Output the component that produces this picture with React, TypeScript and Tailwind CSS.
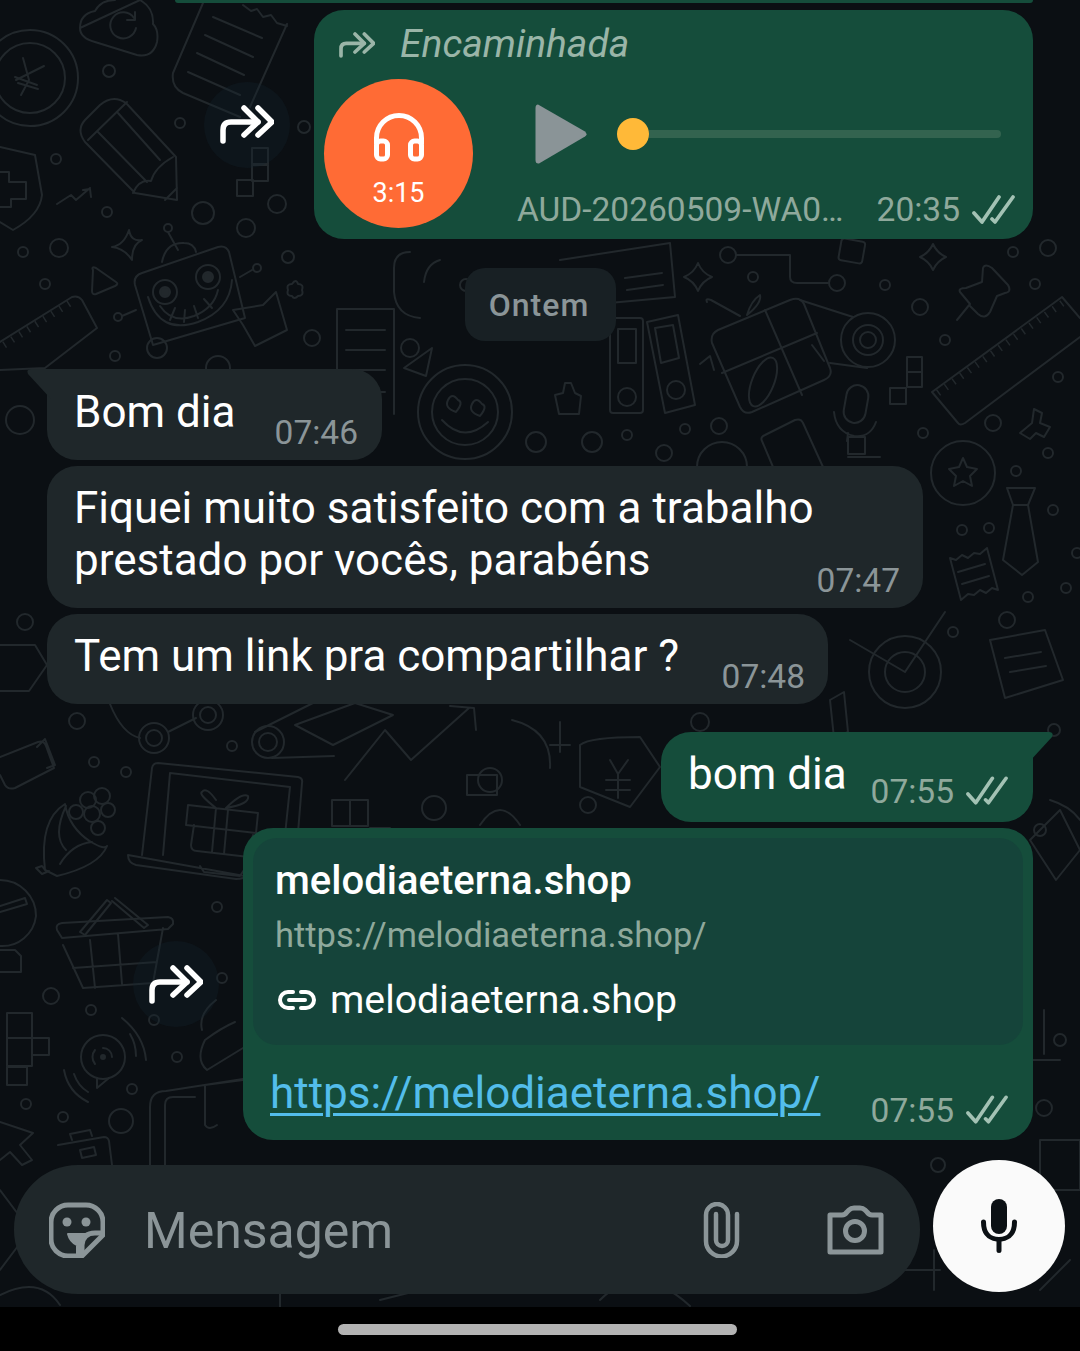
import React from 'react';

const font = { fontFamily: 'Roboto, "Noto Sans", sans-serif' };

const ForwardGlyph = ({ className }: { className: string }) => (
  <svg viewBox="0 0 54 39" fill="none" stroke="currentColor" strokeWidth="5.5" strokeLinecap="round" strokeLinejoin="round" className={className}>
    <path d="M3 36V25q0-8 8-8h27" />
    <path d="M24 3l14 14-14 13" />
    <path d="M38 3l14 14-14 13" />
  </svg>
);

const Checks = ({ className }: { className: string }) => (
  <svg viewBox="0 0 45 30" fill="none" stroke="currentColor" strokeWidth="3.7" strokeLinecap="round" strokeLinejoin="round" className={className}>
    <path d="M3 18l8 9L28 2" />
    <path d="M21 24l3 3L42 2" />
  </svg>
);

const Time = ({ children }: { children: string }) => <span className="text-[33.5px] leading-none">{children}</span>;

const ForwardButton = () => (
  <div className="flex h-[86px] w-[86px] items-center justify-center rounded-full bg-[#14232d]/30 text-white">
    <ForwardGlyph className="h-[39px] w-[54px]" />
  </div>
);

const dots: [number, number, number][] = [
  [109, 71, 6], [56, 159, 5], [107, 212, 5], [180, 123, 5], [203, 213, 11], [246, 228, 9], [277, 204, 9], [304, 127, 6], [288, 257, 6],
  [23, 252, 5], [59, 248, 9], [45, 284, 5], [115, 356, 5], [312, 338, 8], [627, 435, 5], [685, 429, 5], [719, 426, 8], [664, 453, 8],
  [753, 277, 5], [885, 285, 5], [920, 307, 8], [945, 340, 5], [1013, 252, 5], [1048, 248, 8], [1035, 284, 5], [1058, 377, 5], [993, 423, 8],
  [923, 433, 5], [1048, 453, 5], [1016, 471, 5], [1053, 510, 5], [962, 530, 5], [989, 528, 5], [1028, 597, 5], [1066, 588, 5], [953, 632, 5],
  [1077, 553, 5], [77, 721, 8], [94, 762, 5], [126, 772, 5], [75, 893, 5], [217, 907, 5], [51, 996, 8], [91, 1010, 5], [154, 1020, 5],
  [222, 978, 5], [177, 1057, 5], [132, 1089, 5], [26, 1104, 5], [63, 1117, 5], [121, 1121, 12], [232, 746, 5], [536, 442, 10], [592, 442, 10],
  [410, 348, 9], [466, 285, 6], [518, 286, 6], [700, 722, 9], [434, 808, 12], [490, 780, 12], [588, 805, 8], [1044, 1108, 8], [938, 1165, 7],
  [1054, 730, 6], [1040, 830, 6], [20, 420, 14], [938, 880, 6], [1000, 1000, 8], [950, 1040, 6], [1060, 1040, 6],
];

const Doodles = () => (
  <svg viewBox="0 0 1080 1307" fill="none" stroke="#22282c" strokeWidth="2" strokeLinecap="round" strokeLinejoin="round" className="absolute left-0 top-0 h-[1307px] w-[1080px]">
    {dots.map(([cx, cy, r], i) => <circle key={i} cx={cx} cy={cy} r={r} />)}
    {/* top left */}
    <circle cx="30" cy="78" r="48" /><circle cx="30" cy="78" r="35" /><path d="M23 58l6 22M44 66L16 80M15 77l22 8M18 83l20 6M29 80l-8 15" />
    <path d="M80 28q0-14 15-17q6-11 20-11M140 0q14 8 13 24q6 6 4 18q-4 16-20 13L95 42q-15-4-15-14z" /><path d="M134 18a13 13 0 1 0 2 10M135 12v8h-8" />
    <path d="M203 3L173 73q-2 14 10 20L240 117M287 24L250 107M243 5l8 6 6-2 6 8 8-2 6 8 10 3" />
    <path d="M213 17l49 21M205 35l48 22M197 53l47 22M188 72l52 23" />
    <path d="M100 105q13-11 26-2L176 157l1 43-42-7L85 142q-9-12 0-22zM118 113l42 47M98 132l49 50M88 140l39-38M133 193q6-14 18-12q4-14 22-24M165 200l12-12" />
    <path d="M0 147l35 8 7 40q-2 20-29 35l-13-8M0 172h9v10h17v17H11v8H0" />
    <path d="M57 204l14-9 5 5 14-12M83 190l7-1 1 8" />
    <rect x="252" y="148" width="16" height="16" /><rect x="252" y="165" width="16" height="16" /><rect x="237" y="180" width="16" height="16" />
    <path d="M112 247q12-2 17-17q2 12 13 10q-10 4-10 20q-8-12-20-13zM93 270q-2-4 3-2l20 14q3 2-1 4l-19 8q-4 1-4-3z" />
    <path d="M135 285q-2-9 7-12l76-26q8-2 11 5l16 66-92 27z" />
    <circle cx="165" cy="292" r="12" /><circle cx="165" cy="292" r="5" fill="#22282c" /><circle cx="208" cy="277" r="12" /><circle cx="208" cy="277" r="5" fill="#22282c" />
    <path d="M148 297q12 38 50 25q32-12 34-42M160 306q12 18 34 10q20-8 24-26M170 320l5-12M184 322l1-12M198 318l-4-12M212 308l-8-9" />
    <circle cx="168" cy="228" r="4" /><path d="M168 232l10 18M162 262q4-20 22-19q10 0 12 9" />
    <circle cx="118" cy="317" r="4" /><path d="M122 316l14-6" /><circle cx="257" cy="268" r="4" /><path d="M252 270l-12 7" />
    <circle cx="157" cy="348" r="10" /><circle cx="218" cy="368" r="12" />
    <path d="M233 310l30-5 13-13 11 38-32 16-12-21zM288 290q-2-6 4-6q4-6 6 0q6 0 4 6q2 6-4 6q-4 4-6 0q-6 0-4-6z" />
    <path d="M0 342l72-45q6-2 10 3l15 28-52 40M0 370l45-2" />
    <path d="M4 345l66-42" strokeWidth="7" strokeDasharray="1.5 8" strokeLinecap="butt" />
    {/* document and smiley */}
    <path d="M337 309h57v105M337 309v60M346 330h39M346 350h39M346 370h39M346 392h39" />
    <path d="M432 348l-28 20 22 8z" />
    <circle cx="465" cy="412" r="47" /><circle cx="465" cy="412" r="33" />
    <path d="M448 400q4-8 10 0q6 2-2 12q-12-4-8-12zM472 404q4-8 10 0q6 2-2 12q-12-4-8-12zM442 420q22 24 46 2" />
    <path d="M555 395l8-2 2-10 6 0 4 10 6 3-2 18-20 0z" />
    <path d="M410 252q-16 0-16 16v24q2 24 26 26M440 260q-14 4-16 22" />
    {/* note, binders, gift */}
    <path d="M560 260l110-17 5 54-110 10M625 278l37-5M627 290l36-5" />
    <path d="M698 263q4 10 14 14q-10 4-14 14q-4-10-14-14q10-4 14-14zM933 244q4 9 13 13q-9 4-13 13q-4-9-13-13q9-4 13-13z" />
    <circle cx="728" cy="255" r="8" /><path d="M736 255h54v22q0 6 7 6h32" /><circle cx="837" cy="283" r="8" />
    <rect x="840" y="240" width="24" height="22" rx="3" transform="rotate(10 852 250)" />
    <rect x="610" y="318" width="33" height="95" rx="3" /><rect x="618" y="329" width="18" height="34" /><circle cx="627" cy="397" r="9" />
    <path d="M647 322l31-7 17 90-30 8zM655 328l18-3 6 33-18 5z" /><circle cx="676" cy="390" r="9" />
    <path d="M718 330l72-30q10-4 14 4l26 64q3 8-6 12l-72 32q-8 3-12-5l-28-64q-2-9 6-13zM765 310l37 85M722 373l95-40" />
    <path d="M707 302q-2-4 4-2l29 16M747 315q4-14 13-20q2 8-13 20M700 364l10-8 4 14" />
    <ellipse cx="763" cy="382" rx="11" ry="26" transform="rotate(22 763 382)" />
    <circle cx="868" cy="340" r="27" /><circle cx="868" cy="340" r="15" /><circle cx="868" cy="340" r="8" /><path d="M800 300l53 17M830 363l37 5M812 345l12 16" />
    {/* top right */}
    <path d="M957 320l13-16-10-12q-2-4 6-4l16-6 1-14q2-5 9 0l16 17q4 7-3 8l-8 3-7 16q-5 8-12 2l-8-8" />
    <path d="M932 392l130-95 18 21M932 392l26 31q2 3 7 0L1080 337" />
    <path d="M938 393l126-91" strokeWidth="7" strokeDasharray="1.5 8" strokeLinecap="butt" />
    <rect x="907" y="357" width="15" height="15" /><rect x="907" y="372" width="15" height="15" /><rect x="890" y="388" width="16" height="16" />
    <rect x="845" y="385" width="22" height="38" rx="11" transform="rotate(10 856 404)" />
    <path d="M834 412q2 20 20 24q16 2 22-14M848 433l-1 8" />
    <path d="M773 467l-11-26q-2-4 3-6l30-15q6-2 8 3l20 44" />
    <path d="M848 437h17v17h-17zM848 457h32" />
    <path d="M697 467a25 25 0 0 1 50 0" />
    <path d="M1020 433l12-10 2-14 8 4-2 10 10 4-6 10-8-4-6 6z" />
    <circle cx="963" cy="473" r="32" />
    <path d="M963 458l4 9 10 2-7 7 2 10-9-5-9 5 2-10-7-7 10-2z" />
    <path d="M1007 488h28l-7 17h-15zM1013 505l-10 55 19 15 16-13-10-57" />
    <path d="M950 558l6 2 6-5 6 3 6-5 6 1 7-6 11 42-6-2-6 5-6-3-6 5-6-1-7 6zM958 572l27-8M962 584l27-8" />
    <path d="M990 640l55-10 18 50-58 18zM1005 658l36-6M1010 672l36-6" /><circle cx="1007" cy="620" r="8" />
    <circle cx="905" cy="672" r="36" /><circle cx="905" cy="672" r="20" /><path d="M905 672l40-60M850 640l55 32" />
    {/* video, film, laptop */}
    <path d="M0 757l38-15q6-2 8 4l8 22-39 20q-7 2-10-3l-5-10M37 747l8-8 10 26-8 3" />
    <circle cx="154" cy="738" r="15" /><circle cx="154" cy="738" r="8" /><circle cx="208" cy="715" r="15" /><circle cx="208" cy="715" r="8" />
    <path d="M168 732l28-14M110 704q12 30 30 34" />
    <circle cx="268" cy="742" r="16" /><circle cx="268" cy="742" r="9" /><path d="M255 732l60-30M272 758l62-2" />
    <path d="M142 855l10-87q1-5 6-5l140 14q5 1 4 6l-5 62M163 855l7-82 120 14-5 48" />
    <path d="M128 855l122 22M128 855q0 8 8 10l100 14q8 0 12-4l6-12M200 866l4 6 36 4 4-6" />
    <path d="M188 805l70 8-2 20-70-8zM194 825l-3 20q0 6 6 6l52 6 4-22M216 808l-4 44M228 810l-4 44M216 808q-18-14-14-16q4-6 14 8M226 808q16-16 22-12q2 8-22 12" />
    {/* corn */}
    <path d="M45 870q-6-50 20-66q4 24 26 38q14 8 16 4q-8 20-50 30zM45 870l-3-4-6 2 6 6 7-3M66 806q-14 30 0 44M92 842q-20 2-32 22" />
    <circle cx="88" cy="800" r="8" /><circle cx="102" cy="796" r="8" /><circle cx="76" cy="812" r="7" /><circle cx="92" cy="814" r="8" /><circle cx="108" cy="810" r="7" /><circle cx="98" cy="828" r="7" />
    {/* basket */}
    <path d="M57 930q-2-6 5-7l106-6q6 1 5 7l-5 5L62 938zM63 945l20 43 70-5 10-55M73 968l84-6M90 940l5 48M118 934l4 50" />
    <path d="M80 932l27-32 4 3-26 32zM115 898l33 27-4 3-32-27" />
    <path d="M0 880a36 36 0 0 1 36 36 a34 34 0 0 1-36 30M0 906l25-8 2 6-27 8M0 950h15l6 6v16H0" />
    <rect x="7" y="1013" width="25" height="25" /><rect x="7" y="1038" width="25" height="28" /><rect x="32" y="1038" width="17" height="17" /><rect x="7" y="1067" width="20" height="18" />
    <circle cx="103" cy="1057" r="22" /><path d="M97 1078l0 10 12-10M103 1048a9 9 0 0 1 9 9M95 1064a11 11 0 0 1 0-14" />
    <path d="M122 1018q22 18 24 42M130 1034q6 10 6 22M64 1070q4 22 24 32M74 1074q4 12 14 18" />
    <circle cx="103" cy="1057" r="2" fill="#22282c" />
    <path d="M205 1040q16-12 30-18M205 1040q-10 20 2 30l36-22M216 1000q-18 14-14 30" />
    <path d="M0 1122l33 11-13 12 12 15-10 5-12-13-10 8" />
    <path d="M58 1145l46-8q4 0 5 4l3 24M72 1140l-2-6 20-4 2 6M80 1150l14-3 2 8-14 3z" />
    <path d="M150 1165v-58q0-16 16-16l77-12M165 1165v-60q0-8 8-8h22M205 1085l38-5M205 1085v40q4 6 12 0" />
    {/* middle lower */}
    <path d="M345 780l40-50 26 30 58-52M450 706l24 2 2 22" />
    <path d="M295 725l60-22 38 12-60 30z" />
    <path d="M512 720q40 10 38 48M560 722v30M550 745h20" />
    <rect x="467" y="775" width="30" height="20" />
    <path d="M580 745q10-8 60-8l20 30-30 40-50-20z" /><path d="M610 760l8 14 10-14M618 774v24M606 780h24M606 790h24" />
    <path d="M332 800h36v26h-36zM350 800v26" />
    <path d="M480 825q20-30 40 0M390 828h-20" />
    <path d="M830 700l14-8 4 40-14 6zM0 645h35l12 20-18 26H0" /><circle cx="25" cy="622" r="8" />
    {/* right column lower */}
    <path d="M1030 840l30-30 20 40-24 30zM1050 800q20 6 30 20" />
    <path d="M1044 1010v44M1030 1060h30M1040 1140h40v50h-40z" />
    <path d="M940 1270h-40M934 1250v40M1040 1290l30-30" />
    <path d="M0 1190l30 40-30 40M0 1295q40-20 60 10M600 1300q40-40 90 6M380 1300l40-10M280 1290v17M500 1290q20-20 40 0M760 1290h50" />
  </svg>
);

const App = () => {
  return (
    <div className="relative flex h-[1351px] w-[1080px] flex-col overflow-hidden bg-black text-white" style={font}>
      <div className="relative h-[1307px] w-full overflow-hidden bg-[#0b0f13]">
        <Doodles />
        <div className="relative flex h-full flex-col">
          <div className="ml-[175px] mr-[47px] h-[3px] rounded-b-[28px] bg-[#154d3b]" />

          {/* audio forwarded */}
          <div className="mt-[7px] flex items-center justify-end gap-[24px] pr-[47px]">
            <ForwardButton />
            <div className="flex h-[229px] w-[719px] flex-col rounded-[30px] bg-[#154d3b] pl-[10px] pr-[17px]">
              <div className="flex h-[69px] items-center gap-[25px] pl-[15px] text-[#9ab5a8]">
                <ForwardGlyph className="h-[26px] w-[36px]" />
                <span className="text-[39px] italic leading-none">Encaminhada</span>
              </div>
              <div className="flex items-start">
                <div className="flex h-[149px] w-[149px] shrink-0 flex-col items-center rounded-full bg-[#ff6b35] pt-[33px]">
                  <svg viewBox="0 0 52 50" fill="none" stroke="white" strokeWidth="5" className="h-[50px] w-[52px]">
                    <path d="M3.5 32V26a22.5 22.5 0 0 1 45 0v6" />
                    <rect x="3.5" y="29" width="11" height="18" rx="4" />
                    <rect x="37.5" y="29" width="11" height="18" rx="4" />
                  </svg>
                  <span className="mt-[15px] text-[27px] leading-[32px]">3:15</span>
                </div>
                <div className="flex min-w-0 flex-1 flex-col pl-[44px]">
                  <div className="flex h-[109px] items-center pl-[18px]">
                    <svg viewBox="0 0 52 60" className="h-[60px] w-[52px] shrink-0">
                      <path d="M3 0.5Q0.5 0.5 0.5 4v52q0 4 3.5 3.5l46-27q3-2 0-5z" fill="#8a9497" />
                    </svg>
                    <div className="ml-[30px] flex items-center">
                      <div className="h-[32px] w-[32px] shrink-0 rounded-full bg-[#ffb938]" />
                      <div className="h-[8px] w-[352px] rounded-r-full bg-[#33634f]" />
                    </div>
                  </div>
                  <div className="flex h-[40px] items-center justify-between pt-[4px] text-[#8fa99c]">
                    <span className="text-[33.5px] leading-none">AUD-20260509-WA0…</span>
                    <div className="flex items-center gap-[11px]">
                      <Time>20:35</Time>
                      <Checks className="h-[30px] w-[45px] text-[#a3c2b4]" />
                    </div>
                  </div>
                </div>
              </div>
            </div>
          </div>

          {/* date chip */}
          <div className="mt-[29px] flex justify-center">
            <div className="flex h-[73px] w-[151px] items-center justify-center rounded-[20px] bg-[#182024] pr-[2px] text-[32px] font-medium tracking-[1px] text-[#8b9598]">
              Ontem
            </div>
          </div>

          {/* incoming */}
          <div className="relative ml-[47px] mt-[28px] flex h-[91px] w-[335px] justify-between rounded-[30px] rounded-tl-none bg-[#1f272a] pl-[27px] pr-[24px] pt-[17px]">
            <svg viewBox="0 0 24 30" className="absolute left-[-20px] top-0 h-[30px] w-[24px]">
              <path d="M4 0h20v30L1 5Q-1 0 4 0z" fill="#1f272a" />
            </svg>
            <span className="text-[44px] leading-[52px]">Bom dia</span>
            <span className="self-end pb-[11px] text-[33.5px] leading-none text-[#8b9598]">07:46</span>
          </div>

          <div className="ml-[47px] mt-[6px] flex h-[142px] w-[876px] justify-between rounded-[30px] bg-[#1f272a] pl-[27px] pr-[23px] pt-[16px]">
            <p className="text-[44px] leading-[52px]">Fiquei muito satisfeito com a trabalho<br />prestado por vocês, parabéns</p>
            <span className="self-end pb-[11px] text-[33.5px] leading-none text-[#8b9598]">07:47</span>
          </div>

          <div className="ml-[47px] mt-[6px] flex h-[90px] w-[781px] justify-between rounded-[30px] bg-[#1f272a] pl-[27px] pr-[23px] pt-[16px]">
            <span className="text-[44px] leading-[52px]">Tem um link pra compartilhar ?</span>
            <span className="self-end pb-[11px] text-[33.5px] leading-none text-[#8b9598]">07:48</span>
          </div>

          {/* outgoing */}
          <div className="relative ml-[661px] mt-[28px] flex h-[90px] w-[372px] justify-between rounded-[30px] rounded-tr-none bg-[#154d3b] pl-[27px] pr-[24px] pt-[16px]">
            <svg viewBox="0 0 24 30" className="absolute right-[-20px] top-0 h-[30px] w-[24px]">
              <path d="M20 0H0v30L23 5Q25 0 20 0z" fill="#154d3b" />
            </svg>
            <span className="text-[44px] leading-[52px]">bom dia</span>
            <div className="flex items-center gap-[11px] self-end pb-[14px] text-[#8fa99c]">
              <Time>07:55</Time>
              <Checks className="h-[30px] w-[44px] text-[#a3c2b4]" />
            </div>
          </div>

          {/* link preview */}
          <div className="mt-[6px] flex items-center justify-end gap-[24px] pr-[47px]">
            <ForwardButton />
            <div className="flex h-[312px] w-[790px] flex-col rounded-[30px] bg-[#154d3b] p-[10px]">
              <div className="flex h-[207px] flex-col rounded-[24px] bg-[#15443a] pl-[22px] pt-[20px]">
                <span className="text-[40px] font-medium leading-[46px]">melodiaeterna.shop</span>
                <span className="mt-[10px] text-[34.5px] leading-[42px] text-[#8fa99c]">https://melodiaeterna.shop/</span>
                <div className="mt-[21px] flex items-center gap-[14px] pl-[3px]">
                  <svg viewBox="0 0 38 20" fill="none" stroke="white" strokeWidth="4" strokeLinecap="round" className="h-[20px] w-[38px]">
                    <path d="M15 2H10a8 8 0 0 0 0 16h5M23 2h5a8 8 0 0 1 0 16h-5M11 10h16" />
                  </svg>
                  <span className="text-[39.2px] leading-[46px]">melodiaeterna.shop</span>
                </div>
              </div>
              <div className="flex flex-1 justify-between pl-[17px] pr-[14px] pt-[22px]">
                <span className="text-[44px] leading-[52px] text-[#53bdeb] underline decoration-[3px] underline-offset-[5px]">https://melodiaeterna.shop/</span>
                <div className="flex items-center gap-[11px] self-end pb-[3px] text-[#8fa99c]">
                  <Time>07:55</Time>
                  <Checks className="h-[30px] w-[44px] text-[#a3c2b4]" />
                </div>
              </div>
            </div>
          </div>

          {/* composer */}
          <div className="mt-[20px] flex items-start pl-[14px] pr-[15px]">
            <div className="mt-[5px] flex h-[129px] w-[906px] items-center rounded-[64px] bg-[#1f272a] pl-[35px] pr-[36px] text-[#8b9598]">
              <svg viewBox="0 0 56 56" fill="none" stroke="currentColor" strokeWidth="5" strokeLinejoin="round" className="h-[56px] w-[56px] shrink-0">
                <path d="M19 3h18a17 17 0 0 1 17 17v13L33 54H19A17 17 0 0 1 2 37V20A17 17 0 0 1 19 3z" />
                <path d="M54 31H46q-12 0-13 12V54" />
                <circle cx="18" cy="20" r="4.5" fill="currentColor" stroke="none" />
                <circle cx="37" cy="20" r="4.5" fill="currentColor" stroke="none" />
                <path d="M19 32H42Q34 34 32 41V52H28V43Q21 40 19 32z" fill="currentColor" strokeWidth="2" />
              </svg>
              <span className="ml-[39px] flex-1 pt-[2px] text-[50px] leading-none">Mensagem</span>
              <svg viewBox="0 0 37 56" fill="none" stroke="currentColor" strokeWidth="4.5" strokeLinecap="round" className="mr-[87px] h-[56px] w-[37px] shrink-0">
                <path d="M34 12V39A15.5 15.5 0 0 1 3 39V13A11 11 0 0 1 25 13V38A6 6 0 0 1 13 38V12" />
              </svg>
              <svg viewBox="0 0 57 51" fill="none" stroke="currentColor" strokeWidth="5" strokeLinejoin="round" className="h-[51px] w-[57px] shrink-0">
                <path d="M3 11h12q3 0 5-3l2-2q2-2 5-2h6q3 0 5 2l2 2q2 3 5 3h9V48H3z" />
                <circle cx="28" cy="27" r="9.5" />
              </svg>
            </div>
            <div className="ml-[13px] flex h-[132px] w-[132px] items-center justify-center rounded-full bg-[#fafafa]">
              <svg viewBox="0 0 40 54" fill="#0b1014" className="h-[54px] w-[40px]">
                <rect x="12" y="0" width="16" height="35" rx="8" />
                <path d="M2 23a2.5 2.5 0 0 1 5 0q0 15 13 15t13-15a2.5 2.5 0 0 1 5 0q0 17-15.5 19.5v9a2.5 2.5 0 0 1-5 0v-9Q2 40 2 23z" />
              </svg>
            </div>
          </div>
        </div>
      </div>

      {/* nav bar */}
      <div className="flex h-[44px] justify-center bg-black pt-[17px]">
        <div className="ml-[-6px] h-[11px] w-[399px] rounded-full bg-[#b3b3b3]" />
      </div>
    </div>
  );
};

export default App;
